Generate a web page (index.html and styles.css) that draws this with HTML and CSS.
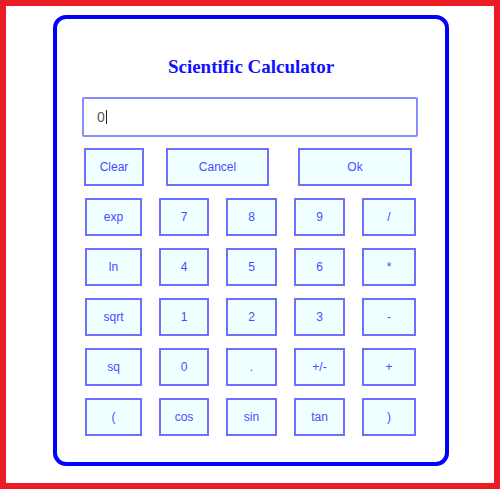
FILE: index.html
```html
<!DOCTYPE html>
<html>
<head>
<meta charset="utf-8">
<link rel="stylesheet" href="styles.css">
</head>
<body>
<div class="frame">
  <div class="calc">
    <h1 class="title">Scientific Calculator</h1>
    <div class="display"><span class="value">0</span><span class="caret"></span></div>
    <div class="top-row">
      <button class="btn btn-clear">Clear</button>
      <button class="btn btn-cancel">Cancel</button>
      <button class="btn btn-ok">Ok</button>
    </div>
    <div class="keys">
      <button class="btn">exp</button>
      <button class="btn">7</button>
      <button class="btn">8</button>
      <button class="btn">9</button>
      <button class="btn">/</button>
      <button class="btn">ln</button>
      <button class="btn">4</button>
      <button class="btn">5</button>
      <button class="btn">6</button>
      <button class="btn">*</button>
      <button class="btn">sqrt</button>
      <button class="btn">1</button>
      <button class="btn">2</button>
      <button class="btn">3</button>
      <button class="btn">-</button>
      <button class="btn">sq</button>
      <button class="btn">0</button>
      <button class="btn">.</button>
      <button class="btn">+/-</button>
      <button class="btn">+</button>
      <button class="btn">(</button>
      <button class="btn">cos</button>
      <button class="btn">sin</button>
      <button class="btn">tan</button>
      <button class="btn">)</button>
    </div>
  </div>
</div>
</body>
</html>
```

FILE: styles.css
```css
html, body {
  margin: 0;
  padding: 0;
  background: #ffffff;
}
.frame {
  box-sizing: border-box;
  width: 500px;
  height: 489px;
  border: 6px solid #ed1c24;
  padding: 9px 0 0 47px;
}
.calc {
  box-sizing: border-box;
  width: 396px;
  height: 451px;
  border: 4px solid #0000ff;
  border-radius: 13px;
  background: #ffffff;
  display: flex;
  flex-direction: column;
}
.title {
  margin: 36px 0 0 0;
  font-family: "Liberation Serif", "Times New Roman", serif;
  font-weight: bold;
  font-size: 19px;
  line-height: 24px;
  color: #1010ff;
  text-align: center;
}
.display {
  box-sizing: border-box;
  margin: 18px 0 0 25px;
  width: 336px;
  height: 40px;
  border: 2px solid #8a8aff;
  border-radius: 2px;
  padding-left: 13px;
  display: flex;
  align-items: center;
  font-family: "Liberation Sans", Arial, sans-serif;
  font-size: 14px;
  color: #555555;
}
.caret {
  display: inline-block;
  width: 1px;
  height: 14px;
  background: #222222;
  margin-left: 1px;
}
.btn {
  box-sizing: border-box;
  margin: 0;
  padding: 0;
  height: 38px;
  border: 2px solid #6f6fff;
  border-radius: 0;
  background: #f0ffff;
  font-family: "Liberation Sans", Arial, sans-serif;
  font-size: 12px;
  color: #4a4aff;
}
.top-row {
  display: flex;
  margin: 11px 0 0 27px;
}
.btn-clear { width: 60px; }
.btn-cancel { width: 103px; margin-left: 22px; }
.btn-ok { width: 114px; margin-left: 29px; }
.keys {
  display: grid;
  grid-template-columns: 57px 50px 51px 51px 54px;
  grid-auto-rows: 38px;
  column-gap: 17px;
  row-gap: 12px;
  margin: 12px 0 0 28px;
}
.keys .btn { width: 100%; }
```
